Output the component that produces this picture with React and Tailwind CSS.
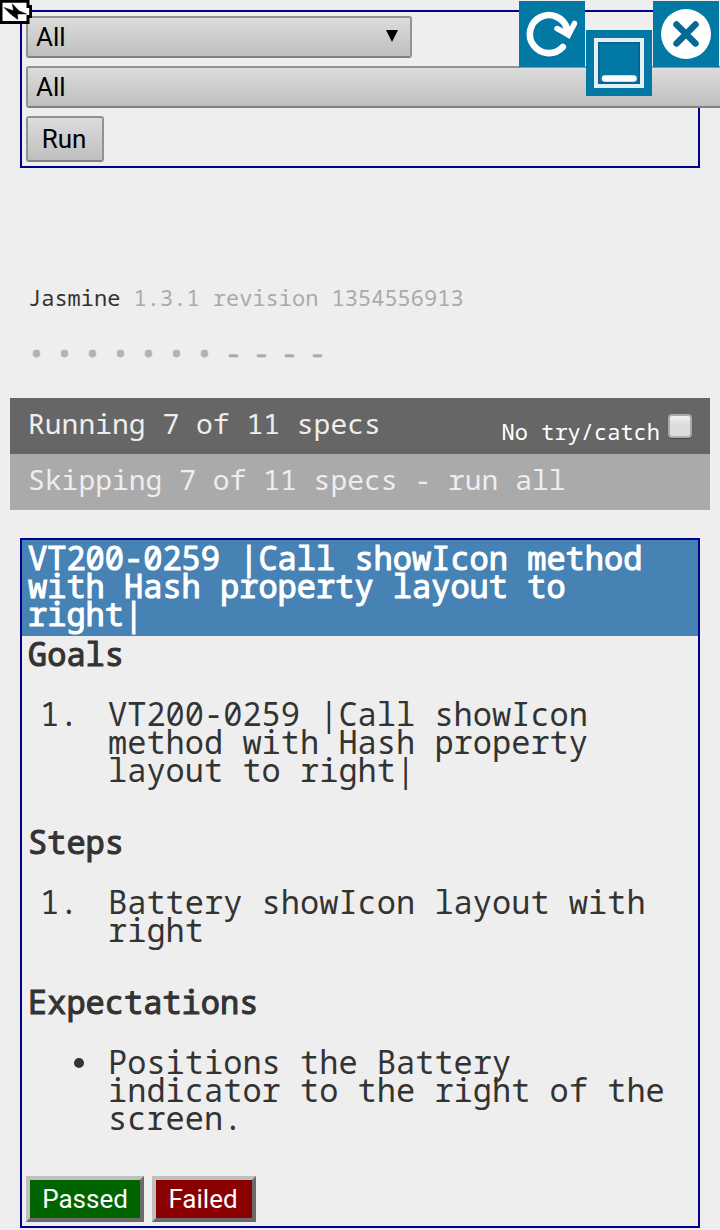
const mono =
  "font-['Noto_Sans_Mono','DejaVu_Sans_Mono',monospace]";

const heavy = '[-webkit-text-stroke:1.1px_currentColor]';

function Select({ className, arrow }) {
  return (
    <div
      className={`flex h-[42px] shrink-0 items-center justify-between rounded-[3px] border-2 border-[#929292] border-b-[#808080] bg-linear-to-b from-[#dcdcdc] to-[#bfbfbf] pr-3 pl-2 font-[Roboto,sans-serif] text-[26px] leading-[38px] text-black ${className}`}
    >
      <span>All</span>
      {arrow && (
        <svg width="12" height="12" viewBox="0 0 12 12" className="mb-0.5">
          <path d="M0 0H12L6 12Z" fill="#000" />
        </svg>
      )}
    </div>
  );
}

function BatteryIcon() {
  return (
    <svg className="absolute top-0 left-0" width="32" height="24" viewBox="0 0 32 24">
      <path d="M1 1.2H28V6.5H30.7V16.5H28V22.5H1Z" fill="#fff" stroke="#000" strokeWidth="3" />
      <path d="M4 7.5L13.5 10.8L12.3 3.8L18.9 10.8L26.5 14L17.5 14L17.8 19.5L10.5 14Z" fill="#000" stroke="#000" strokeWidth="0.5" />
    </svg>
  );
}

function Refresh() {
  return (
    <svg className="absolute top-px left-[519px] bg-[#0279a4]" width="66" height="66" viewBox="0 0 66 66">
      <path d="M43.8 46A19 19 0 1 1 48 27.5" fill="none" stroke="#fff" strokeWidth="6.6" strokeLinecap="round" />
      <path d="M38 27.5L49.5 33.5L55.5 22.5" fill="none" stroke="#fff" strokeWidth="5.5" strokeLinecap="round" />
      <path d="M37 29.5L50.5 38L57.5 23.5L48 28Z" fill="#fff" />
    </svg>
  );
}

function Minimize() {
  return (
    <svg className="absolute top-[30px] left-[586px] bg-[#0279a4]" width="66" height="66" viewBox="0 0 66 66">
      <rect x="12" y="12" width="42" height="42" fill="none" stroke="#075f90" strokeWidth="3" />
      <rect x="10" y="10" width="46" height="46" fill="none" stroke="#e4f0f5" strokeWidth="4" />
      <path d="M19 48.5H47.5" stroke="#fff" strokeWidth="6.5" strokeLinecap="round" />
    </svg>
  );
}

function Close() {
  return (
    <svg className="absolute top-px left-[653px] bg-[#0279a4]" width="66" height="66" viewBox="0 0 66 66">
      <circle cx="33" cy="33" r="25" fill="#fff" />
      <path d="M23.5 23.5L42.5 42.5M42.5 23.5L23.5 42.5" stroke="#056996" strokeWidth="6.5" strokeLinecap="round" />
    </svg>
  );
}

function Heading({ children }) {
  return <h3 className={`h-7 pl-1.5 ${heavy}`}>{children}</h3>;
}

function Item({ marker, lines }) {
  return (
    <div className="mt-8 flex">
      <div className="w-[86px] shrink-0 pl-[18px]">{marker}</div>
      <div>
        {lines.map((line) => (
          <div key={line} className="h-7 whitespace-pre">{line}</div>
        ))}
      </div>
    </div>
  );
}

export default function App() {
  return (
    <div className={`relative h-[1230px] w-[720px] overflow-hidden bg-[#eee] pt-2.5 text-[#333] ${mono}`}>
      <div className="mx-5 flex h-[158px] flex-col gap-2 border-2 border-[#00008b] p-1">
        <Select className="w-[386px]" arrow />
        <Select className="w-[760px]" />
        <button className="h-[46px] w-[78px] rounded-[3px] border-2 border-[#929292] border-b-[#808080] bg-linear-to-b from-[#dcdcdc] to-[#bfbfbf] pr-0.5 font-[Roboto,sans-serif] text-[26px] leading-[42px] text-black">
          Run
        </button>
      </div>

      <div className="mt-[116px] h-7 pl-7 text-[22px] leading-[26px] whitespace-pre">
        Jasmine<span className="text-[#aaa]"> 1.3.1 revision 1354556913</span>
      </div>
      <div className="mt-7 flex h-7 pl-7 text-[28px] leading-[26px] text-[#b3b3b3]">
        {'•••••••'.split('').map((mark, i) => (
          <span key={i} className="w-7 [-webkit-text-stroke:1px_currentColor]">{mark}</span>
        ))}
        {'----'.split('').map((mark, i) => (
          <span key={i} className="w-7 pl-px leading-6 text-[#aaa] [-webkit-text-stroke:0.6px_currentColor]">{mark}</span>
        ))}
      </div>

      <div className="mx-2.5 mt-[30px] flex h-14 justify-between bg-[#666] pr-[18px] pl-[18px] text-[28px] leading-[50px] text-[#eee]">
        <span>Running 7 of 11 specs</span>
        <span className="flex gap-2 text-[22px] leading-[66px] text-white">
          No try/catch
          <span className="mt-4 h-6 w-6 rounded-[4px] border-2 border-[#aaa] bg-linear-to-b from-[#efefef] from-10% to-[#dcdcdc] to-40% shadow-[0_1px_1px_#444]" />
        </span>
      </div>
      <div className="mx-2.5 h-14 bg-[#aaa] pl-[18px] text-[28px] leading-[50px] text-[#eee]">
        Skipping 7 of 11 specs - run all
      </div>

      <div className="mx-5 mt-7 h-[690px] border-2 border-[#00008b] text-[32px] leading-7">
        <h2 className={`h-24 bg-[#4682b4] pt-1 pl-1.5 text-white ${heavy}`}>
          <div className="h-7">VT200-0259 |Call showIcon method</div>
          <div className="h-7">with Hash property layout to</div>
          <div className="h-7">right|</div>
        </h2>
        <div className="pt-1">
          <Heading>Goals</Heading>
          <Item marker="1." lines={['VT200-0259 |Call showIcon', 'method with Hash property', 'layout to right|']} />
        </div>
        <div className="mt-11">
          <Heading>Steps</Heading>
          <Item marker="1." lines={['Battery showIcon layout with', 'right']} />
        </div>
        <div className="mt-11">
          <Heading>Expectations</Heading>
          <Item
            marker={<span className="mt-2.5 ml-[34px] block h-2.5 w-2.5 rounded-full bg-[#333]" />}
            lines={['Positions the Battery', 'indicator to the right of the', 'screen.']}
          />
        </div>
        <div className="mt-11 flex gap-2 pl-1 font-[Roboto,sans-serif] text-[26px] leading-[38px] text-white">
          <button className="h-[46px] w-[118px] border-4 border-t-[#c0c0c0] border-r-[#6b6b6b] border-b-[#6b6b6b] border-l-[#c0c0c0] bg-[#006400]">
            Passed
          </button>
          <button className="h-[46px] w-[104px] border-4 border-t-[#c0c0c0] border-r-[#6b6b6b] border-b-[#6b6b6b] border-l-[#c0c0c0] bg-[#8b0000] pr-0.5">
            Failed
          </button>
        </div>
      </div>

      <BatteryIcon />
      <Refresh />
      <Minimize />
      <Close />
    </div>
  );
}
